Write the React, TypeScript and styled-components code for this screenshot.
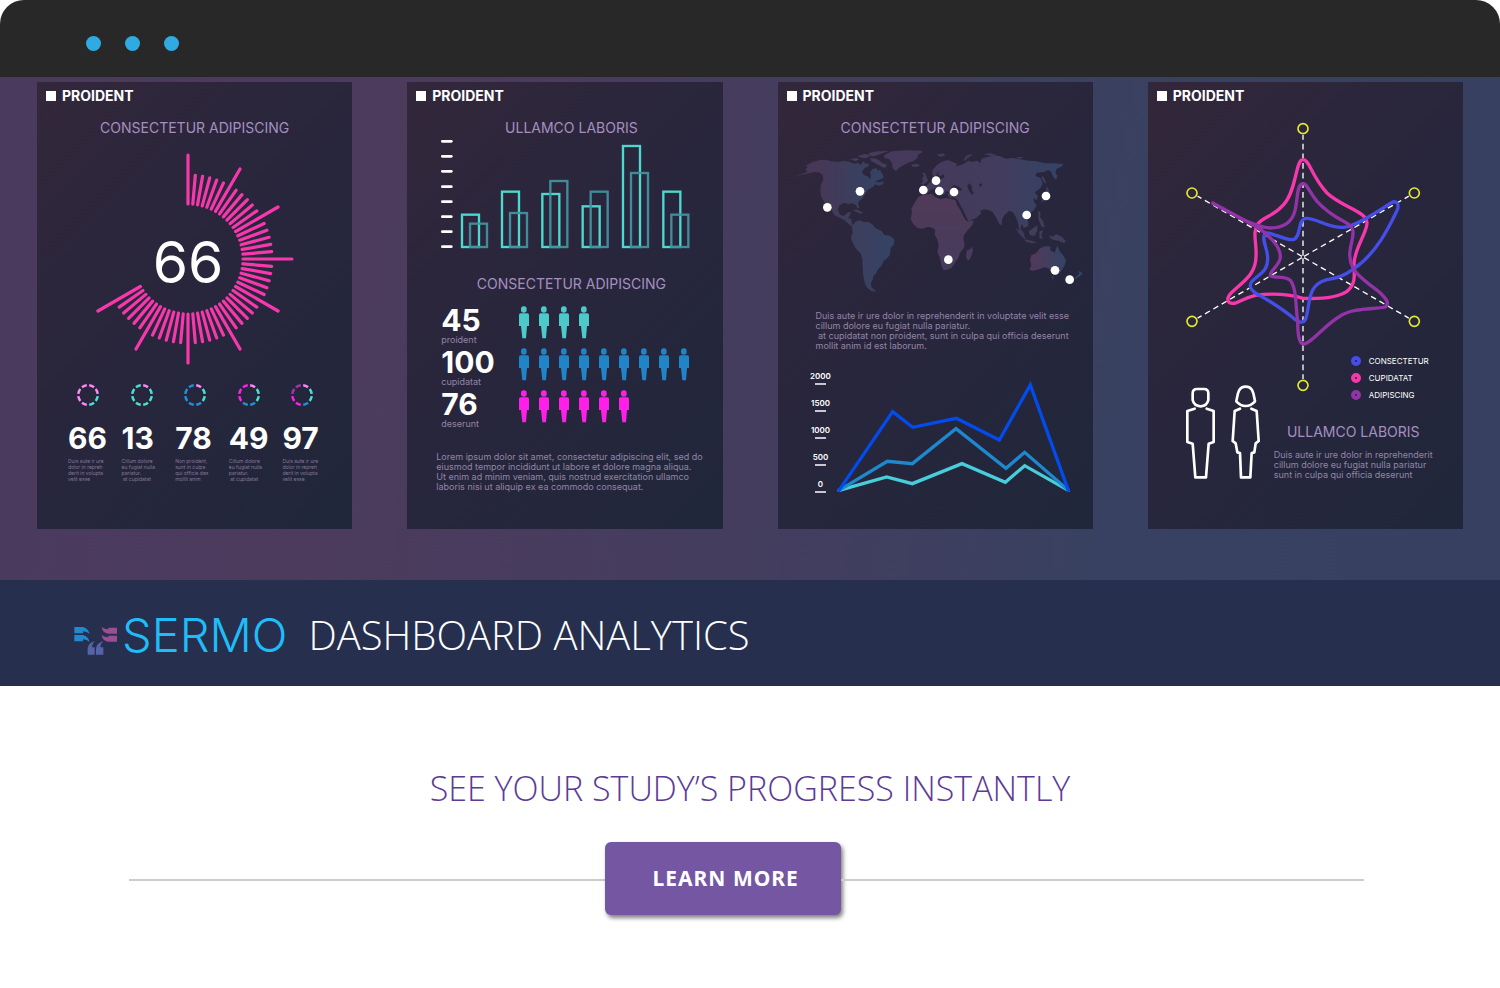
import React from "react";
import styled, { createGlobalStyle } from "styled-components";

const GlobalStyle = createGlobalStyle`
  *, *::before, *::after { box-sizing: border-box; }
  body { margin: 0; background: #ffffff; font-family: Inter, "Noto Sans", sans-serif; }
  h1, h2, h3, p, ul { margin: 0; padding: 0; font-weight: inherit; list-style: none; }
  svg { display: block; }
`;

const c = {
  aqua: "#4fd8cf",
  teal: "#43909f",
  mint: "#49e0cf",
  blush: "#ff86f3",
  azure: "#1f8fdb",
  sky: "#2084c8",
  magenta: "#ff1fe9",
  violet: "#a333b5",
  hot: "#f738ac",
  lilac: "#a68fc0",
};

const TitleBar = styled.header`
  display: flex;
  align-items: center;
  gap: 24px;
  height: 77px;
  padding: 9px 86px 0;
  background: #282828;
  border-radius: 24px 24px 0 0;
`;

const WindowDot = styled.span`
  width: 15px;
  height: 15px;
  border-radius: 50%;
  background: #2fabe1;
`;

const Stage = styled.main`
  display: grid;
  grid-template-columns: repeat(4, minmax(0, 1fr));
  gap: 55px;
  padding: 5px 37px 51px;
  background: linear-gradient(100deg, #4a3a5e 0%, #4c3b5d 25%, #443d5e 52%, #384161 75%, #374060 100%);
`;

const Card = styled.section`
  display: flex;
  flex-direction: column;
  min-height: 447px;
  padding: 7px 8px 0;
  background: linear-gradient(135deg, #33273a 0%, #2b263c 32%, #26263c 60%, #20273b 100%);
`;

const CardHead = styled.h2`
  display: flex;
  align-items: center;
  gap: 6px;
  height: 14px;
  color: #ffffff;
  font-size: 14px;
  font-weight: 700;
  line-height: 14px;
  &::before {
    content: "";
    width: 10px;
    height: 10px;
    margin-left: 1px;
    background: #ffffff;
  }
`;

const Subtitle = styled.h3<{ $top: number }>`
  margin-top: ${(p) => p.$top}px;
  color: ${c.lilac};
  font-size: 14px;
  font-weight: 400;
  line-height: 16px;
  text-align: center;
  white-space: nowrap;
`;

const Copy = styled.p<{ $top: number; $left?: number }>`
  margin: ${(p) => p.$top}px 0 0 ${(p) => p.$left ?? 0}px;
  color: #9484a8;
  font-size: 9px;
  line-height: 10px;
  white-space: pre;
`;

const GaugeArt = styled.svg`
  width: 200px;
  height: 214px;
  margin: 16px 0 0 51px;
`;

const StatRow = styled.div`
  display: grid;
  grid-template-columns: repeat(5, 1fr);
  width: 268px;
  margin: 17px 0 0 23px;
`;

const Stat = styled.div`
  display: flex;
  flex-direction: column;
  align-items: flex-start;
`;

const RingArt = styled.svg`
  width: 24px;
  height: 24px;
  margin-left: 8px;
`;

const StatValue = styled.strong`
  margin-top: 14px;
  color: #ffffff;
  font-size: 30px;
  font-weight: 700;
  line-height: 34px;
`;

const StatNote = styled.p`
  margin-top: 3px;
  color: #85769a;
  font-size: 5px;
  line-height: 6px;
  white-space: pre;
`;

const Offset = styled.div`
  display: flex;
  flex-direction: column;
  padding-left: 13px;
`;

const BarsArt = styled.svg`
  width: 250px;
  height: 112px;
  margin: 2px 0 0 12px;
`;

const PeopleList = styled.ul`
  margin: 14px 0 0 13px;
`;

const PeopleRow = styled.li`
  display: flex;
  align-items: flex-start;
  height: 42px;
`;

const PeopleCount = styled.div`
  display: flex;
  flex-direction: column;
  width: 78px;
  color: #ffffff;
  font-size: 30px;
  font-weight: 700;
  line-height: 28px;
  small {
    color: #9484a8;
    font-size: 9px;
    font-weight: 400;
    line-height: 12px;
  }
`;

const PeopleIcons = styled.div`
  display: flex;
  gap: 10px;
`;

const MapArt = styled.svg`
  width: 297px;
  height: 150px;
  margin: 10px 0 0 4px;
`;

const ChartRow = styled.div`
  display: flex;
  margin: 20px 0 0 21px;
`;

const Axis = styled.ul`
  width: 28px;
  color: #ffffff;
  font-size: 8px;
  font-weight: 600;
  line-height: 10px;
  text-align: center;
`;

const AxisMark = styled.li`
  display: flex;
  flex-direction: column;
  align-items: center;
  gap: 2px;
  height: 27px;
  &::after {
    content: "";
    width: 11px;
    height: 2px;
    background: #c9c6d2;
  }
`;

const LinesArt = styled.svg`
  width: 234px;
  height: 114px;
  margin: 10px 0 0 2px;
`;

const RadarArt = styled.svg`
  width: 236px;
  height: 270px;
  margin: 19px 0 0 29px;
`;

const FigureRow = styled.div`
  display: flex;
  gap: 13px;
  margin: -38px 0 0 29px;
`;

const FiguresArt = styled.svg`
  flex: none;
  width: 76px;
  height: 96px;
  margin-top: 30px;
`;

const Legend = styled.ul`
  display: flex;
  flex-direction: column;
  gap: 5px;
  padding: 1px 0 0 77px;
`;

const LegendItem = styled.li<{ $color: string }>`
  display: flex;
  align-items: center;
  gap: 8px;
  color: #ffffff;
  font-size: 8px;
  line-height: 12px;
  &::before {
    content: "";
    width: 10px;
    height: 10px;
    border: 4px solid ${(p) => p.$color};
    border-radius: 50%;
  }
`;

const BrandBar = styled.div`
  display: flex;
  align-items: center;
  height: 106px;
  padding: 4px 74px 0;
  background: #272f4e;
  white-space: nowrap;
`;

const LogoArt = styled.svg`
  width: 44px;
  height: 32px;
  margin-top: 12px;
`;

const Wordmark = styled.span`
  margin-left: 4px;
  color: #1fbcf8;
  font-size: 47px;
  font-weight: 300;
  line-height: 56px;
`;

const BrandTitle = styled.h1`
  margin-left: 21px;
  color: #ffffff;
  font-family: "Open Sans", "Noto Sans", sans-serif;
  font-size: 40px;
  font-weight: 350;
  line-height: 56px;
`;

const Promo = styled.section`
  padding: 76px 0 72px;
`;

const PromoTitle = styled.h2`
  color: #5c3b97;
  font-family: "Open Sans", "Noto Sans", sans-serif;
  font-size: 34px;
  font-weight: 300;
  line-height: 52px;
  text-align: center;
`;

const ActionRow = styled.div`
  display: flex;
  align-items: center;
  margin: 28px 136px 0 129px;
`;

const Rule = styled.span<{ $grow: number }>`
  flex: ${(p) => p.$grow} 1 0;
  height: 2px;
  margin-top: 2px;
  background: #cccccc;
`;

const LearnMore = styled.button`
  width: 236px;
  height: 73px;
  padding: 0 0 1px 6px;
  border: 0;
  border-radius: 6px;
  background: #7456a2;
  box-shadow: 2px 3px 4px rgba(0, 0, 0, 0.5);
  color: #ffffff;
  font-family: "Noto Sans", sans-serif;
  font-size: 21px;
  font-weight: 700;
  letter-spacing: 1px;
  cursor: pointer;
`;

const ticks = Array.from({ length: 49 }, (_, i) => ({ angle: i * 5, long: i % 6 === 0 }));

function Gauge() {
  return (
    <GaugeArt viewBox="-92 -107 200 214" role="img" aria-label="66">
      <g stroke={c.hot} strokeWidth="3.2" strokeLinecap="round">
        {ticks.map((t) => (
          <line key={t.angle} x1="0" x2="0" y1="-55" y2={t.long ? -104 : -84} transform={`rotate(${t.angle})`} />
        ))}
      </g>
      <text x="0" y="24" fill="#ffffff" fontSize="57" fontWeight="400" textAnchor="middle">
        66
      </text>
    </GaugeArt>
  );
}

function Ring({ colors }: { colors: string[] }) {
  return (
    <RingArt viewBox="-12 -12 24 24" aria-hidden="true">
      {colors.map((color, i) => (
        <path
          key={i}
          d="M1.2 -9.7 A9.8 9.8 0 0 1 6 -7.7"
          fill="none"
          stroke={color}
          strokeWidth="2.5"
          transform={`rotate(${i * 45})`}
        />
      ))}
    </RingArt>
  );
}

const { blush: P, mint: T, azure: B, magenta: M, violet: V } = c;
const stats = [
  { value: "66", ring: [P, P, T, T, P, P, P, P], note: "Duis aute ir ure\ndolor in repreh\nderit in volupta\nvelit esse" },
  { value: "13", ring: [P, T, T, T, T, T, T, T], note: "Cillum dolore\neu fugiat nulla\npariatur.\n at cupidatat" },
  { value: "78", ring: [P, T, T, B, B, B, B, B], note: "Non proident,\nsunt in culpa\nqui officia des\nmollit anim" },
  { value: "49", ring: [P, T, T, B, B, M, M, M], note: "Cillum dolore\neu fugiat nulla\npariatur.\n at cupidatat" },
  { value: "97", ring: [P, T, T, B, M, M, V, V], note: "Duis aute ir ure\ndolor in repreh\nderit in volupta\nvelit esse" },
];

const bars = [
  { x: 185, front: 413, back: 440 },
  { x: 305, front: 344, back: 408 },
  { x: 426, front: 351, back: 312 },
  { x: 547, front: 388, back: 344 },
  { x: 668, front: 207, back: 288 },
  { x: 789, front: 344, back: 413 },
];

function Bars() {
  return (
    <BarsArt viewBox="120 185 750 336" aria-hidden="true">
      <g stroke="#ffffff" strokeWidth="8" strokeLinecap="round">
        {[195, 240, 285, 331, 376, 421, 466, 511].map((y) => (
          <line key={y} x1="127" x2="154" y1={y} y2={y} />
        ))}
      </g>
      <g fill="none" strokeWidth="7">
        {bars.map((b) => (
          <React.Fragment key={b.x}>
            <rect x={b.x + 1} y={b.front + 2} width="51" height={510 - b.front} stroke={c.aqua} />
            <rect x={b.x + 25} y={b.back + 2} width="51" height={510 - b.back} stroke={c.teal} strokeOpacity="0.95" />
          </React.Fragment>
        ))}
      </g>
    </BarsArt>
  );
}

function Person({ color }: { color: string }) {
  return (
    <svg width="10" height="33" viewBox="0 0 30 99" fill={color} aria-hidden="true">
      <rect x="6" y="1" width="17" height="19" rx="8" />
      <path d="M5 22 H25 Q30 22 30 27 V60 H24 L21 97 H10 L6 60 H0 V27 Q0 22 5 22Z" />
    </svg>
  );
}

const people = [
  { value: "45", label: "proident", count: 4, color: "#4cc9c9" },
  { value: "100", label: "cupidatat", count: 9, color: c.sky },
  { value: "76", label: "deserunt", count: 6, color: c.magenta },
];

const cities = [
  [172, 394], [270, 346], [460, 342], [498, 314], [508, 345], [552, 348],
  [828, 360], [770, 417], [535, 551], [855, 583], [899, 611],
];

function WorldMap() {
  return (
    <MapArt viewBox="60 210 891 450" role="img" aria-label="World map">
      <defs>
        <linearGradient id="america" gradientUnits="userSpaceOnUse" x1="150" y1="0" x2="320" y2="0">
          <stop offset="0" stopColor="#463856" />
          <stop offset="1" stopColor="#344363" />
        </linearGradient>
        <linearGradient id="south" gradientUnits="userSpaceOnUse" x1="240" y1="0" x2="360" y2="0">
          <stop offset="0" stopColor="#3f3e5c" />
          <stop offset="1" stopColor="#344364" />
        </linearGradient>
        <linearGradient id="africa" gradientUnits="userSpaceOnUse" x1="0" y1="360" x2="0" y2="580">
          <stop offset="0" stopColor="#503a59" />
          <stop offset="1" stopColor="#463b5c" />
        </linearGradient>
        <linearGradient id="asia" gradientUnits="userSpaceOnUse" x1="460" y1="0" x2="870" y2="0">
          <stop offset="0" stopColor="#453a5b" />
          <stop offset="0.55" stopColor="#423c5d" />
          <stop offset="1" stopColor="#334365" />
        </linearGradient>
        <linearGradient id="oceania" gradientUnits="userSpaceOnUse" x1="778" y1="0" x2="888" y2="0">
          <stop offset="0" stopColor="#543858" />
          <stop offset="1" stopColor="#334465" />
        </linearGradient>
      </defs>
      <path
        fill="url(#america)"
        d="M72 303 L92 296 L112 287 L106 280 L113 274 L108 269 L126 259 L150 252 L168 251 L184 256 L204 258 L222 255 L240 258 L252 264 L262 260 L272 266 L280 256 L288 264 L294 260 L297 270 L284 276 L276 287 L280 296 L292 301 L300 309 L303 299 L300 289 L307 280 L318 276 L324 284 L330 281 L336 293 L342 303 L334 309 L322 313 L316 319 L330 319 L342 317 L338 325 L326 329 L316 325 L308 334 L298 338 L290 346 L284 356 L278 366 L268 374 L264 382 L268 394 L264 398 L258 388 L248 382 L236 384 L222 380 L208 388 L204 402 L210 416 L222 420 L232 410 L242 407 L240 418 L234 426 L244 430 L246 444 L254 452 L248 454 L236 444 L222 432 L206 424 L192 416 L184 400 L176 386 L170 380 L174 394 L168 390 L162 376 L154 364 L151 346 L152 328 L160 312 L158 298 L150 290 L136 288 L122 290 L104 295Z"
      />
      <path
        fill="#433c5c"
        d="M240 250 L258 246 L268 250 L256 256Z M262 240 L284 234 L302 238 L290 246 L276 246Z M300 246 L320 248 L336 260 L352 268 L344 276 L330 270 L316 262 L304 256Z M294 232 L320 226 L356 225 L338 232 L322 238 L306 242Z M246 402 L262 401 L280 410 L272 413 L258 407Z"
      />
      <path
        fill="url(#asia)"
        d="M342 238 L366 226 L410 223 L452 224 L458 228 L444 236 L442 246 L430 256 L414 260 L400 268 L386 276 L378 286 L368 276 L366 262 L358 250 L344 246Z M424 266 L440 263 L450 268 L440 273 L428 272Z"
      />
      <path
        fill="url(#south)"
        d="M246 450 L256 438 L268 433 L282 438 L296 438 L308 446 L318 458 L334 464 L342 476 L360 480 L373 490 L372 504 L362 516 L360 536 L350 548 L340 556 L334 570 L324 580 L318 592 L310 600 L308 612 L302 620 L304 634 L318 646 L306 646 L292 636 L284 620 L280 600 L278 574 L277 548 L272 532 L258 518 L248 500 L243 486 L248 470Z"
      />
      <path
        fill="url(#africa)"
        d="M446 362 L462 356 L486 354 L496 364 L512 370 L528 366 L546 370 L556 372 L562 388 L572 404 L580 422 L590 436 L612 434 L606 448 L592 464 L582 476 L580 490 L584 506 L580 518 L570 530 L566 544 L554 562 L544 576 L530 582 L520 582 L514 566 L510 546 L502 528 L506 508 L502 490 L494 476 L496 462 L488 456 L474 452 L456 458 L442 456 L430 444 L422 430 L426 410 L424 398 L434 380Z M590 524 L600 520 L606 512 L609 524 L602 546 L594 554 L588 542Z"
      />
      <path
        fill="url(#asia)"
        d="M452 322 L460 318 L456 308 L462 300 L456 292 L464 290 L470 302 L474 314 L466 322 L458 326Z M450 344 L452 332 L468 332 L476 322 L488 316 L494 306 L502 308 L512 310 L524 304 L520 294 L512 300 L504 296 L508 284 L502 290 L496 302 L486 296 L488 282 L500 268 L514 258 L532 252 L548 258 L562 264 L556 272 L570 268 L584 262 L596 254 L606 258 L622 254 L632 262 L634 248 L648 244 L668 240 L690 240 L706 248 L728 246 L750 250 L774 254 L800 256 L824 262 L850 262 L880 264 L874 272 L860 278 L856 288 L862 300 L858 312 L848 300 L844 288 L834 282 L822 288 L800 290 L796 300 L812 306 L818 322 L812 336 L800 344 L794 350 L804 360 L800 372 L790 366 L792 378 L800 388 L792 402 L780 412 L768 414 L764 424 L776 438 L774 450 L762 456 L754 444 L752 458 L764 476 L758 478 L748 462 L744 440 L738 424 L728 408 L718 404 L704 416 L696 430 L696 448 L688 444 L678 424 L668 408 L656 402 L642 400 L630 404 L634 412 L618 426 L596 436 L588 424 L576 402 L564 380 L560 368 L548 364 L540 366 L532 356 L540 348 L560 342 L574 344 L576 338 L562 330 L552 326 L544 334 L536 348 L528 344 L522 358 L512 344 L502 334 L492 338 L480 342 L470 354 L456 356Z"
      />
      <path
        fill="#423c5c"
        d="M500 236 L520 232 L526 238 L512 243Z M580 252 L588 240 L602 234 L606 238 L592 246 L586 254Z M640 234 L660 232 L684 238 L664 240Z M736 244 L760 242 L752 248Z M736 454 L748 464 L766 484 L764 490 L748 474Z M764 490 L786 494 L802 500 L784 502 L766 496Z M776 466 L790 456 L802 448 L802 464 L794 480 L780 478Z M808 466 L820 464 L814 476 L818 490 L808 486Z M838 478 L848 482 L858 474 L876 482 L888 496 L882 502 L866 494 L850 492 L840 486Z M804 404 L812 410 L810 424 L820 436 L824 454 L816 454 L806 432Z M828 330 L836 340 L838 352 L826 372 L812 380 L824 362 L830 346Z M816 298 L822 306 L830 322 L824 322 L816 308Z"
      />
      <path
        fill="#2b263c"
        d="M592 328 L600 322 L606 332 L606 344 L612 352 L606 356 L598 346 L594 338Z M628 324 L636 322 L636 330 L628 332Z"
      />
      <path
        fill="none"
        stroke="#2b263c"
        strokeWidth="5"
        d="M560 372 L576 402 L590 430"
      />
      <path
        fill="url(#oceania)"
        d="M780 552 L784 538 L800 530 L808 518 L820 512 L830 510 L842 512 L840 522 L854 530 L862 508 L868 524 L878 536 L888 552 L884 568 L872 588 L862 596 L848 594 L838 578 L824 574 L806 580 L790 584 L778 582 L784 568Z M844 602 L852 602 L848 610Z M926 584 L938 592 L930 600 L924 604 L912 612 L920 600 L928 594Z"
      />
      {cities.map(([x, y]) => (
        <circle key={x} cx={x} cy={y} r="13" fill="#ffffff" />
      ))}
    </MapArt>
  );
}

function Lines() {
  return (
    <LinesArt viewBox="201 243 702 342" aria-hidden="true">
      <g fill="none" strokeWidth="10" strokeLinejoin="miter" strokeLinecap="round">
        <path stroke="#48cddb" d="M207 571 L350 531 L427 551 L576 491 L706 547 L764 497 L895 571" />
        <path stroke="#1e87cd" d="M207 571 L352 484 L427 491 L558 386 L708 505 L764 457 L895 571" />
        <path stroke="#034bea" d="M207 571 L368 335 L428 382 L559 355 L688 420 L781 255 L895 571" />
      </g>
    </LinesArt>
  );
}

const spokes = [
  [488, 157], [822, 350], [822, 735], [488, 927], [155, 735], [155, 350],
];

function Radar() {
  return (
    <RadarArt viewBox="134 137 708 810" aria-hidden="true">
      <g stroke="#ffffff" strokeWidth="4" strokeDasharray="17 12">
        {spokes.map(([x, y]) => (
          <line key={`${x}-${y}`} x1={488 + (x - 488) * 0.01} y1={542 + (y - 542) * 0.01} x2={488 + (x - 488) * 0.95} y2={542 + (y - 542) * 0.95} />
        ))}
      </g>
      <g fill="none" strokeWidth="10" strokeLinejoin="round">
        <path stroke={c.hot} d="M488 250 C508 250 512 298 560 350 C604 392 680 405 680 440 C680 470 640 520 641 565 C643 600 645 625 620 645 C590 665 540 668 488 666 C450 655 400 650 345 657 C310 665 292 681 278 681 C262 682 258 668 268 655 C300 620 347 600 347 540 C350 500 335 470 352 443 C370 420 400 420 430 385 C470 340 465 250 488 250Z" />
        <path stroke="#454ee6" d="M497 426 C530 425 560 455 610 453 C650 450 720 400 755 378 C770 372 778 385 770 403 C750 445 710 530 641 577 C610 600 590 605 560 610 C500 625 510 680 497 725 C492 742 475 740 465 730 C430 700 400 680 345 650 C330 640 325 628 335 615 C360 590 383 585 382 545 C382 515 362 490 374 472 C385 462 430 492 457 490 C484 487 470 427 497 426Z" />
        <path stroke="#9233a8" d="M217 380 L350 452 C385 475 420 510 420 540 C422 565 390 580 390 597 C400 608 430 595 450 612 C470 640 465 690 472 732 C472 770 475 803 490 803 C510 803 550 750 595 722 C640 692 700 700 735 692 C750 680 735 665 720 650 C690 625 650 600 638 575 C615 530 640 500 638 465 C630 430 590 440 530 375 C505 345 500 322 488 322 C465 325 475 380 460 415 C445 450 415 455 390 455 C340 452 280 415 217 380Z" />
      </g>
      <g fill="none" stroke="#e6ea2a" strokeWidth="5">
        {spokes.map(([x, y]) => (
          <circle key={`${x}-${y}`} cx={x} cy={y} r="15" />
        ))}
      </g>
    </RadarArt>
  );
}

function Figures() {
  return (
    <FiguresArt viewBox="134 192 228 288" aria-hidden="true">
      <g fill="none" stroke="#ffffff" strokeWidth="8" strokeLinejoin="round" strokeLinecap="round">
        <path d="M170 207 H191 Q204 207 204 220 V240 Q200 258 181 259 Q161 258 157 240 V220 Q157 207 170 207Z" />
        <path d="M163 266 L141 273 V366 L157 371 L165 472 H197 L205 371 L220 366 V273 L199 266" />
        <path d="M316 200 C340 200 340 226 344 244 Q332 258 316 258 Q300 258 288 244 C292 226 292 200 316 200Z" />
        <path d="M299 266 L283 273 L277 363 L286 370 L291 397 L299 399 L302 472 H330 L334 399 L342 397 L346 370 L355 363 L349 273 L333 266" />
      </g>
    </FiguresArt>
  );
}

function Logo() {
  return (
    <LogoArt viewBox="43 76 132 96" aria-hidden="true">
      <g fill="#2089d0">
        <path d="M44 82 H70 Q86 86 90 103 Q82 96 70 95 V101 H44Z" />
        <path d="M44 106 H70 Q86 110 90 127 Q82 120 70 119 V125 H44Z" />
      </g>
      <g fill="#9a4f93">
        <path d="M172 84 H146 V89 Q134 89 126 82 Q129 101 146 102 H172Z" />
        <path d="M172 108 H146 V113 Q134 113 126 106 Q129 125 146 126 H172Z" />
      </g>
      <g fill="#5763a8">
        <path d="M84 165 V146 Q86 130 105 124 Q97 132 97 143 H105 V165Z" />
        <path d="M109 165 V146 Q112 130 131 124 Q122 132 122 143 H131 V165Z" />
      </g>
    </LogoArt>
  );
}

export default function App() {
  return (
    <>
      <GlobalStyle />
      <TitleBar>
        <WindowDot />
        <WindowDot />
        <WindowDot />
      </TitleBar>

      <Stage>
        <Card>
          <CardHead>PROIDENT</CardHead>
          <Subtitle $top={17}>CONSECTETUR ADIPISCING</Subtitle>
          <Gauge />
          <StatRow>
            {stats.map((s) => (
              <Stat key={s.value}>
                <Ring colors={s.ring} />
                <StatValue>{s.value}</StatValue>
                <StatNote>{s.note}</StatNote>
              </Stat>
            ))}
          </StatRow>
        </Card>

        <Card>
          <CardHead>PROIDENT</CardHead>
          <Offset>
            <Subtitle $top={17}>ULLAMCO LABORIS</Subtitle>
            <Bars />
            <Subtitle $top={26}>CONSECTETUR ADIPISCING</Subtitle>
            <PeopleList>
              {people.map((p) => (
                <PeopleRow key={p.label}>
                  <PeopleCount>
                    {p.value}
                    <small>{p.label}</small>
                  </PeopleCount>
                  <PeopleIcons>
                    {Array.from({ length: p.count }, (_, i) => (
                      <Person key={i} color={p.color} />
                    ))}
                  </PeopleIcons>
                </PeopleRow>
              ))}
            </PeopleList>
            <Copy $top={20} $left={8}>
              {"Lorem ipsum dolor sit amet, consectetur adipiscing elit, sed do\neiusmod tempor incididunt ut labore et dolore magna aliqua.\nUt enim ad minim veniam, quis nostrud exercitation ullamco\nlaboris nisi ut aliquip ex ea commodo consequat."}
            </Copy>
          </Offset>
        </Card>

        <Card>
          <CardHead>PROIDENT</CardHead>
          <Subtitle $top={17}>CONSECTETUR ADIPISCING</Subtitle>
          <WorldMap />
          <Copy $top={15} $left={30}>
            {"Duis aute ir ure dolor in reprehenderit in voluptate velit esse\ncillum dolore eu fugiat nulla pariatur.\n at cupidatat non proident, sunt in culpa qui officia deserunt\nmollit anim id est laborum."}
          </Copy>
          <ChartRow>
            <Axis>
              {["2000", "1500", "1000", "500", "0"].map((v) => (
                <AxisMark key={v}>{v}</AxisMark>
              ))}
            </Axis>
            <Lines />
          </ChartRow>
        </Card>

        <Card>
          <CardHead>PROIDENT</CardHead>
          <Radar />
          <FigureRow>
            <Figures />
            <div>
              <Legend>
                <LegendItem $color="#454ee6">CONSECTETUR</LegendItem>
                <LegendItem $color={c.hot}>CUPIDATAT</LegendItem>
                <LegendItem $color="#9233a8">ADIPISCING</LegendItem>
              </Legend>
              <Subtitle $top={23}>ULLAMCO LABORIS</Subtitle>
              <Copy $top={10}>
                {"Duis aute ir ure dolor in reprehenderit\ncillum dolore eu fugiat nulla pariatur\nsunt in culpa qui officia deserunt"}
              </Copy>
            </div>
          </FigureRow>
        </Card>
      </Stage>

      <BrandBar>
        <Logo />
        <Wordmark>SERMO</Wordmark>
        <BrandTitle>DASHBOARD ANALYTICS</BrandTitle>
      </BrandBar>

      <Promo>
        <PromoTitle>SEE YOUR STUDY’S PROGRESS INSTANTLY</PromoTitle>
        <ActionRow>
          <Rule $grow={10} />
          <LearnMore type="button">LEARN MORE</LearnMore>
          <Rule $grow={11} />
        </ActionRow>
      </Promo>
    </>
  );
}
